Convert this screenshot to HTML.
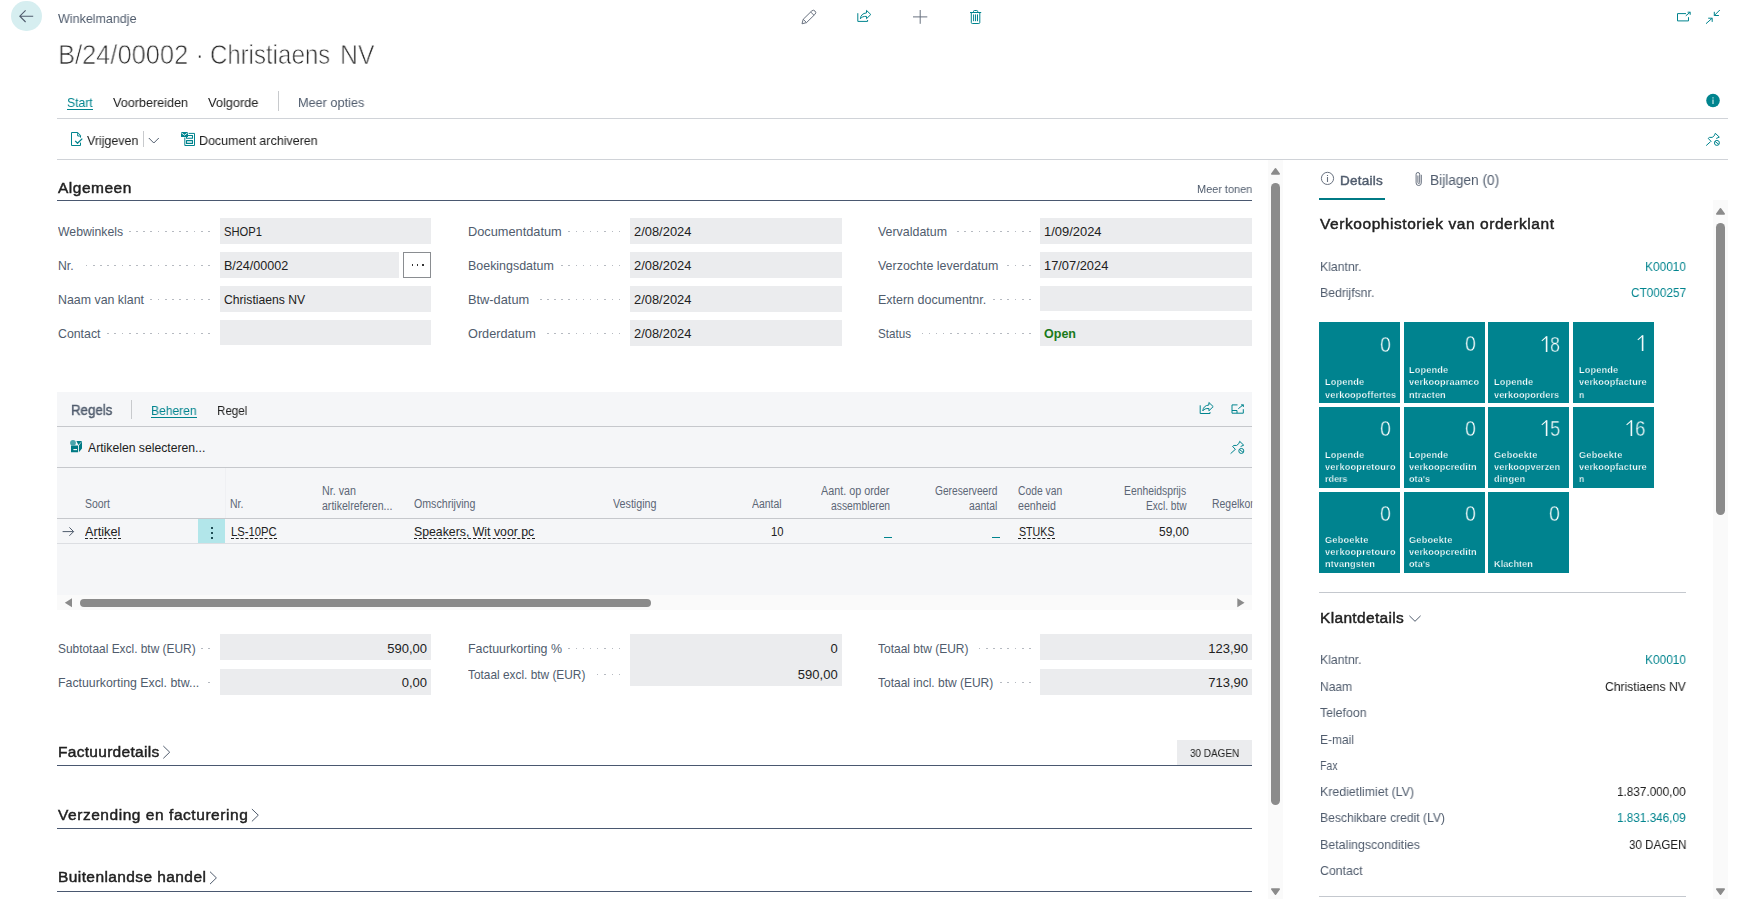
<!DOCTYPE html>
<html><head><meta charset="utf-8"><title>Winkelmandje</title>
<style>
html,body{margin:0;padding:0;background:#fff;}
body{width:1757px;height:899px;position:relative;overflow:hidden;font-family:"Liberation Sans", sans-serif;}
#p div,#p span,#p svg{position:absolute;}
#p span{white-space:pre;}
.dl i{position:absolute;top:0;width:1.5px;height:1.5px;background:#b6bac1;}
</style></head>
<body><div id="p">
<div style="left:11.2px;top:0.8px;width:30.5px;height:30.5px;background:#d6eef0;border-radius:50%;"></div>
<div style="left:67px;top:109px;width:26px;height:1px;background:#00848e;"></div>
<div style="left:278px;top:91px;width:1px;height:20px;background:#c8cacd;"></div>
<div style="left:57px;top:118px;width:1671px;height:1px;background:#d0d3d8;"></div>
<div style="left:57px;top:159px;width:1671px;height:1px;background:#d0d3d8;"></div>
<div style="left:143px;top:131px;width:1px;height:16px;background:#c8cacd;"></div>
<div style="left:57px;top:200px;width:1195px;height:1px;background:#4a5870;"></div>
<div class="dl" style="left:129.35px;top:230.75px;"><i style="left:78.80px"></i><i style="left:71.80px"></i><i style="left:64.30px"></i><i style="left:56.90px"></i><i style="left:49.90px"></i><i style="left:42.90px"></i><i style="left:35.90px"></i><i style="left:28.40px"></i><i style="left:21.00px"></i><i style="left:14.00px"></i><i style="left:7.00px"></i><i style="left:0.00px"></i></div>
<div style="left:220px;top:218px;width:211px;height:26px;background:#ebecee;"></div>
<div class="dl" style="left:85.95px;top:264.75px;"><i style="left:122.20px"></i><i style="left:115.20px"></i><i style="left:107.70px"></i><i style="left:100.30px"></i><i style="left:93.30px"></i><i style="left:86.30px"></i><i style="left:79.30px"></i><i style="left:71.80px"></i><i style="left:64.40px"></i><i style="left:57.40px"></i><i style="left:50.40px"></i><i style="left:43.40px"></i><i style="left:35.90px"></i><i style="left:28.50px"></i><i style="left:21.50px"></i><i style="left:14.50px"></i><i style="left:7.50px"></i><i style="left:0.00px"></i></div>
<div style="left:220px;top:252px;width:179px;height:26px;background:#ebecee;"></div>
<div style="left:403px;top:252px;width:28px;height:26px;background:#fff;box-sizing:border-box;border:1px solid #8a8d91;"></div>
<div style="left:411.6px;top:264.4px;width:1.6px;height:1.6px;background:#333;"></div>
<div style="left:416.8px;top:264.4px;width:1.6px;height:1.6px;background:#333;"></div>
<div style="left:422px;top:264.4px;width:1.6px;height:1.6px;background:#333;"></div>
<div class="dl" style="left:150.35px;top:298.75px;"><i style="left:57.80px"></i><i style="left:50.80px"></i><i style="left:43.30px"></i><i style="left:35.90px"></i><i style="left:28.90px"></i><i style="left:21.90px"></i><i style="left:14.90px"></i><i style="left:7.40px"></i><i style="left:0.00px"></i></div>
<div style="left:220px;top:286px;width:211px;height:26px;background:#ebecee;"></div>
<div class="dl" style="left:107.45px;top:332.75px;"><i style="left:100.70px"></i><i style="left:93.70px"></i><i style="left:86.20px"></i><i style="left:78.80px"></i><i style="left:71.80px"></i><i style="left:64.80px"></i><i style="left:57.80px"></i><i style="left:50.30px"></i><i style="left:42.90px"></i><i style="left:35.90px"></i><i style="left:28.90px"></i><i style="left:21.90px"></i><i style="left:14.40px"></i><i style="left:7.00px"></i><i style="left:0.00px"></i></div>
<div style="left:220px;top:320px;width:211px;height:25px;background:#ebecee;"></div>
<div class="dl" style="left:568.45px;top:230.75px;"><i style="left:50.40px"></i><i style="left:43.40px"></i><i style="left:35.90px"></i><i style="left:28.50px"></i><i style="left:21.50px"></i><i style="left:14.50px"></i><i style="left:7.50px"></i><i style="left:0.00px"></i></div>
<div style="left:630px;top:218px;width:212px;height:26px;background:#ebecee;"></div>
<div class="dl" style="left:561.05px;top:264.75px;"><i style="left:57.80px"></i><i style="left:50.80px"></i><i style="left:43.30px"></i><i style="left:35.90px"></i><i style="left:28.90px"></i><i style="left:21.90px"></i><i style="left:14.90px"></i><i style="left:7.40px"></i><i style="left:0.00px"></i></div>
<div style="left:630px;top:252px;width:212px;height:26px;background:#ebecee;"></div>
<div class="dl" style="left:540.05px;top:298.75px;"><i style="left:78.80px"></i><i style="left:71.80px"></i><i style="left:64.30px"></i><i style="left:56.90px"></i><i style="left:49.90px"></i><i style="left:42.90px"></i><i style="left:35.90px"></i><i style="left:28.40px"></i><i style="left:21.00px"></i><i style="left:14.00px"></i><i style="left:7.00px"></i><i style="left:0.00px"></i></div>
<div style="left:630px;top:286px;width:212px;height:26px;background:#ebecee;"></div>
<div class="dl" style="left:547.05px;top:332.75px;"><i style="left:71.80px"></i><i style="left:64.80px"></i><i style="left:57.30px"></i><i style="left:49.90px"></i><i style="left:42.90px"></i><i style="left:35.90px"></i><i style="left:28.90px"></i><i style="left:21.40px"></i><i style="left:14.00px"></i><i style="left:7.00px"></i><i style="left:0.00px"></i></div>
<div style="left:630px;top:320px;width:212px;height:26px;background:#ebecee;"></div>
<div class="dl" style="left:957.45px;top:230.75px;"><i style="left:71.80px"></i><i style="left:64.80px"></i><i style="left:57.30px"></i><i style="left:49.90px"></i><i style="left:42.90px"></i><i style="left:35.90px"></i><i style="left:28.90px"></i><i style="left:21.40px"></i><i style="left:14.00px"></i><i style="left:7.00px"></i><i style="left:0.00px"></i></div>
<div style="left:1040px;top:218px;width:212px;height:26px;background:#ebecee;"></div>
<div class="dl" style="left:1007.35px;top:264.75px;"><i style="left:21.90px"></i><i style="left:14.90px"></i><i style="left:7.40px"></i><i style="left:0.00px"></i></div>
<div style="left:1040px;top:252px;width:212px;height:26px;background:#ebecee;"></div>
<div class="dl" style="left:993.35px;top:298.75px;"><i style="left:35.90px"></i><i style="left:28.90px"></i><i style="left:21.40px"></i><i style="left:14.00px"></i><i style="left:7.00px"></i><i style="left:0.00px"></i></div>
<div style="left:1040px;top:286px;width:212px;height:25px;background:#ebecee;"></div>
<div class="dl" style="left:921.55px;top:332.75px;"><i style="left:107.70px"></i><i style="left:100.70px"></i><i style="left:93.20px"></i><i style="left:85.80px"></i><i style="left:78.80px"></i><i style="left:71.80px"></i><i style="left:64.80px"></i><i style="left:57.30px"></i><i style="left:49.90px"></i><i style="left:42.90px"></i><i style="left:35.90px"></i><i style="left:28.90px"></i><i style="left:21.40px"></i><i style="left:14.00px"></i><i style="left:7.00px"></i><i style="left:0.00px"></i></div>
<div style="left:1040px;top:320px;width:212px;height:26px;background:#ebecee;"></div>
<div style="left:57px;top:392px;width:1195px;height:203px;background:#f5f6f8;"></div>
<div style="left:57px;top:595px;width:1195px;height:15px;background:#fafafa;"></div>
<div style="left:131px;top:399.5px;width:1px;height:19.0px;background:#c8cacd;"></div>
<div style="left:151px;top:416.5px;width:46px;height:1px;background:#00848e;"></div>
<div style="left:57px;top:426px;width:1195px;height:1px;background:#c6c8cc;"></div>
<div style="left:57px;top:467px;width:1195px;height:1px;background:#c6c8cc;"></div>
<div style="left:224.5px;top:468px;width:1px;height:50px;background:#eff0f3;"></div>
<div style="left:57px;top:518px;width:1195px;height:1px;background:#c6c8cc;"></div>
<div style="left:198px;top:519px;width:27px;height:24px;background:#b2e6ea;"></div>
<div style="left:211px;top:527px;width:1.7px;height:1.7px;background:#1f4e55;"></div>
<div style="left:211px;top:532.1px;width:1.7px;height:1.7px;background:#1f4e55;"></div>
<div style="left:211px;top:537.2px;width:1.7px;height:1.7px;background:#1f4e55;"></div>
<div style="left:85px;top:538.2px;width:36px;height:0px;background:transparent;border-top:1px dashed #222;"></div>
<div style="left:231px;top:538.2px;width:46px;height:0px;background:transparent;border-top:1px dashed #222;"></div>
<div style="left:414px;top:538.2px;width:120.5px;height:0px;background:transparent;border-top:1px dashed #222;"></div>
<div style="left:884.4px;top:537.2px;width:7.4px;height:1.2px;background:#00848e;"></div>
<div style="left:992.2px;top:537.2px;width:7.4px;height:1.2px;background:#00848e;"></div>
<div style="left:1018px;top:538.2px;width:36.5px;height:0px;background:transparent;border-top:1px dashed #222;"></div>
<div style="left:57px;top:543px;width:1195px;height:1px;background:#dcdee2;"></div>
<div style="left:80px;top:598.6px;width:571px;height:8px;background:#8b8b8b;border-radius:4px;"></div>
<div class="dl" style="left:201.15px;top:647.75px;"><i style="left:7.00px"></i><i style="left:0.00px"></i></div>
<div style="left:220px;top:634px;width:211px;height:26px;background:#ebecee;"></div>
<div class="dl" style="left:208.15px;top:681.75px;"><i style="left:0.00px"></i></div>
<div style="left:220px;top:669px;width:211px;height:26px;background:#ebecee;"></div>
<div style="left:630px;top:634px;width:212px;height:52px;background:#ebecee;"></div>
<div class="dl" style="left:568.45px;top:647.75px;"><i style="left:50.40px"></i><i style="left:43.40px"></i><i style="left:35.90px"></i><i style="left:28.50px"></i><i style="left:21.50px"></i><i style="left:14.50px"></i><i style="left:7.50px"></i><i style="left:0.00px"></i></div>
<div class="dl" style="left:596.95px;top:673.75px;"><i style="left:21.90px"></i><i style="left:14.90px"></i><i style="left:7.40px"></i><i style="left:0.00px"></i></div>
<div class="dl" style="left:978.85px;top:647.75px;"><i style="left:50.40px"></i><i style="left:43.40px"></i><i style="left:35.90px"></i><i style="left:28.50px"></i><i style="left:21.50px"></i><i style="left:14.50px"></i><i style="left:7.50px"></i><i style="left:0.00px"></i></div>
<div style="left:1040px;top:634px;width:212px;height:26px;background:#ebecee;"></div>
<div class="dl" style="left:1000.35px;top:681.75px;"><i style="left:28.90px"></i><i style="left:21.90px"></i><i style="left:14.40px"></i><i style="left:7.00px"></i><i style="left:0.00px"></i></div>
<div style="left:1040px;top:669px;width:212px;height:26px;background:#ebecee;"></div>
<div style="left:57px;top:765px;width:1195px;height:1px;background:#4a5870;"></div>
<div style="left:57px;top:828px;width:1195px;height:1px;background:#4a5870;"></div>
<div style="left:57px;top:891px;width:1195px;height:1px;background:#4a5870;"></div>
<div style="left:1177px;top:740px;width:75px;height:25px;background:#ebecee;"></div>
<div style="left:1268px;top:160px;width:15px;height:739px;background:#fafafa;"></div>
<div style="left:1271px;top:183px;width:9px;height:621.6px;background:#8b8b8b;border-radius:4.5px;"></div>
<div style="left:1319px;top:198px;width:66px;height:2px;background:#007a85;"></div>
<div style="left:1318.9px;top:322.1px;width:81.1px;height:80.8px;background:#00838f;"></div>
<div style="left:1403.53px;top:322.1px;width:81.1px;height:80.8px;background:#00838f;"></div>
<div style="left:1488.16px;top:322.1px;width:81.1px;height:80.8px;background:#00838f;"></div>
<div style="left:1572.79px;top:322.1px;width:81.1px;height:80.8px;background:#00838f;"></div>
<div style="left:1318.9px;top:407.05px;width:81.1px;height:80.8px;background:#00838f;"></div>
<div style="left:1403.53px;top:407.05px;width:81.1px;height:80.8px;background:#00838f;"></div>
<div style="left:1488.16px;top:407.05px;width:81.1px;height:80.8px;background:#00838f;"></div>
<div style="left:1572.79px;top:407.05px;width:81.1px;height:80.8px;background:#00838f;"></div>
<div style="left:1318.9px;top:492.0px;width:81.1px;height:80.8px;background:#00838f;"></div>
<div style="left:1403.53px;top:492.0px;width:81.1px;height:80.8px;background:#00838f;"></div>
<div style="left:1488.16px;top:492.0px;width:81.1px;height:80.8px;background:#00838f;"></div>
<div style="left:1319px;top:592px;width:367px;height:1px;background:#c4c8ce;"></div>
<div style="left:1319px;top:895.5px;width:367px;height:1px;background:#c4c8ce;"></div>
<div style="left:1713px;top:200px;width:15px;height:699px;background:#fafafa;"></div>
<div style="left:1716px;top:223px;width:9px;height:292px;background:#8b8b8b;border-radius:4.5px;"></div>
<svg width="1757" height="899" viewBox="0 0 1757 899" style="left:0;top:0">
<path d="M33.2 16.2H19.8M25.6 10.4L19.8 16.2L25.6 22" fill="none" stroke="#505c6d" stroke-width="1.1"/>
<path d="M148.8 138L153.8 143L158.8 138" fill="none" stroke="#505c6d" stroke-width="1"/>
<path d="M62.6 531.6H73.6M69.4 527.4L73.6 531.6L69.4 535.8" fill="none" stroke="#505c6d" stroke-width="1"/>
<path d="M72 598.2V607.2L64.8 602.7Z" fill="#8b8b8b"/>
<path d="M1237.3 598.2V607.2L1244.5 602.7Z" fill="#8b8b8b"/>
<path d="M163.3 746.0L169.7 752.2L163.3 758.4" fill="none" stroke="#505c6d" stroke-width="1"/>
<path d="M251.9 809.0L258.3 815.2L251.9 821.4" fill="none" stroke="#505c6d" stroke-width="1"/>
<path d="M210.0 871.7L216.4 877.9L210.0 884.1" fill="none" stroke="#505c6d" stroke-width="1"/>
<path d="M1271.7 174L1275.5 168.7L1279.3 174Z" fill="#8b8b8b" stroke="#8b8b8b" stroke-width="1.4" stroke-linejoin="round"/>
<path d="M1271.7 889L1275.5 894.3L1279.3 889Z" fill="#8b8b8b" stroke="#8b8b8b" stroke-width="1.4" stroke-linejoin="round"/>
<path d="M1546.6 336.2V352" stroke="#f2fafa" stroke-width="1.6" fill="none"/>
<path d="M1541.8 340.9L1546.3999999999999 336.9" stroke="#f2fafa" stroke-width="1.15" fill="none"/>
<path d="M1642.6 335.2V351" stroke="#f2fafa" stroke-width="1.6" fill="none"/>
<path d="M1637.8 339.9L1642.3999999999999 335.9" stroke="#f2fafa" stroke-width="1.15" fill="none"/>
<path d="M1546.6 420.2V436" stroke="#f2fafa" stroke-width="1.6" fill="none"/>
<path d="M1541.8 424.9L1546.3999999999999 420.9" stroke="#f2fafa" stroke-width="1.15" fill="none"/>
<path d="M1631.4 420.2V436" stroke="#f2fafa" stroke-width="1.6" fill="none"/>
<path d="M1626.6000000000001 424.9L1631.2 420.9" stroke="#f2fafa" stroke-width="1.15" fill="none"/>
<path d="M1409.4 615.8L1415 621.3L1420.6 615.8" fill="none" stroke="#505c6d" stroke-width="1"/>
<path d="M1716.7 214L1720.5 208.7L1724.3 214Z" fill="#8b8b8b" stroke="#8b8b8b" stroke-width="1.4" stroke-linejoin="round"/>
<path d="M1716.7 889L1720.5 894.3L1724.3 889Z" fill="#8b8b8b" stroke="#8b8b8b" stroke-width="1.4" stroke-linejoin="round"/>
<path d="M803.2 19.3L811.7 11A2.3 2.3 0 0 1 815 14.3L806.5 22.6L802 23.8ZM803.2 19.3L806.5 22.6M810.7 12L814 15.3" fill="none" stroke="#68717f" stroke-width="1" stroke-linejoin="round" stroke-linecap="butt" />
<path d="M866.5 10.4L870.8 14.5L866.5 18.7V16.4C863.5 16.2 861.6 17 860.4 18.8C860.6 15.4 862.8 13.2 866.5 12.9Z" fill="none" stroke="#00848e" stroke-width="1" stroke-linejoin="round" stroke-linecap="butt" />
<path d="M857.8 13.2V21.4H867.6V20" fill="none" stroke="#00848e" stroke-width="1" stroke-linejoin="round" stroke-linecap="butt" />
<path d="M1208.9 402.5L1213.1999999999998 406.6L1208.9 410.8V408.5C1205.9 408.3 1204.0 409.1 1202.8 410.90000000000003C1203.0 407.5 1205.1999999999998 405.3 1208.9 405.0Z" fill="none" stroke="#00848e" stroke-width="1" stroke-linejoin="round" stroke-linecap="butt" />
<path d="M1200.1999999999998 405.3V413.5H1210.0V412.1" fill="none" stroke="#00848e" stroke-width="1" stroke-linejoin="round" stroke-linecap="butt" />
<path d="M920.2 10V23.8M913 16.9H927.3" fill="none" stroke="#68717f" stroke-width="1" stroke-linejoin="round" stroke-linecap="butt" />
<path d="M970 12.5H981.2M973.5 12.5V11.5A1 1 0 0 1 974.5 10.5H976.7A1 1 0 0 1 977.7 11.5V12.5M971.3 12.5V22.5A1 1 0 0 0 972.3 23.5H978.8A1 1 0 0 0 979.8 22.5V12.5M973.6 14.4V21.2M975.55 14.4V21.2M977.5 14.4V21.2" fill="none" stroke="#00848e" stroke-width="1" stroke-linejoin="round" stroke-linecap="butt" />
<path d="M1686 13.6H1677.5V20.9H1688.5V17.2M1685.8 15.8L1690.2 12.2M1687.6 12.2H1690.2V14.8" fill="none" stroke="#00848e" stroke-width="1" stroke-linejoin="round" stroke-linecap="butt" />
<path d="M1719.8 10L1714.3 15.5M1714.3 11.8V15.5H1718.9M1706 23.7L1712.2 18.2M1708.2 18.2H1712.2V21.9" fill="none" stroke="#00848e" stroke-width="1" stroke-linejoin="round" stroke-linecap="butt" />
<circle cx="1713" cy="100.5" r="6.8" fill="#00848e"/>
<path d="M1713 97.3V98.4M1713 99.6V104" stroke="#c9e8ea" stroke-width="1.2" fill="none"/>
<path d="M1716.2 138.5L1719.3 137.1L1715.3 133.3L1714.4 135.6L1712.2 137.4H1709.5L1708.2 138.4L1711.3 141.6M1710.6 141.6L1706.2 145.6" fill="none" stroke="#00848e" stroke-width="1" stroke-linejoin="round" stroke-linecap="butt" />
<circle cx="1716.9" cy="142.9" r="2.5" fill="none" stroke="#00848e" stroke-width="1"/>
<path d="M1715 141.4L1718.8 144.4" fill="none" stroke="#00848e" stroke-width="1" stroke-linejoin="round" stroke-linecap="butt" />
<path d="M1240.6 446.55L1243.6999999999998 445.15L1239.6999999999998 441.35L1238.8000000000002 443.65L1236.6 445.45000000000005H1233.9L1232.6 446.45000000000005L1235.6999999999998 449.65M1235.0 449.65L1230.6 453.65" fill="none" stroke="#00848e" stroke-width="1" stroke-linejoin="round" stroke-linecap="butt" />
<circle cx="1241.3000000000002" cy="450.95000000000005" r="2.5" fill="none" stroke="#00848e" stroke-width="1"/>
<path d="M1239.4 449.45000000000005L1243.1999999999998 452.45000000000005" fill="none" stroke="#00848e" stroke-width="1" stroke-linejoin="round" stroke-linecap="butt" />
<path d="M1237.5 404.9H1232V413.2H1243.3V409.2M1232 410.5H1237V413.2M1238.3 408.7L1243.4 404.7M1241 404.9H1243.3V407" fill="none" stroke="#00848e" stroke-width="1" stroke-linejoin="round" stroke-linecap="butt" style="stroke-linejoin:miter"/>
<path d="M77.7 132.5H71.5V145.5H80.5V142.6M80.5 137.6V135.4L77.7 132.5V136H80.5" fill="none" stroke="#00848e" stroke-width="1" stroke-linejoin="round" stroke-linecap="butt" />
<path d="M75.2 140.9L77.5 143.2L82.3 138.6" fill="none" stroke="#00848e" stroke-width="1.3" stroke-linejoin="round" stroke-linecap="butt" />
<path d="M181 132H188V137H181Z" fill="#00848e"/>
<path d="M181.3 132.8L184.5 135.2L187.7 132.8" fill="none" stroke="#fff" stroke-width="0.9"/>
<path d="M188.6 133.4H194.5V145.5H184.8V137.6" fill="none" stroke="#00848e" stroke-width="1" stroke-linejoin="round" stroke-linecap="butt" />
<path d="M186.5 135.5H192.5V138.3H186.5ZM186.5 140.6H192.5V143.4H186.5Z" fill="none" stroke="#00848e" stroke-width="1.1" stroke-linejoin="round" stroke-linecap="butt" />
<path d="M71 445.6H78V452.2H71Z M76.4 441H82L78.4 445Z M78.9 445.6L82 441.6V448.4L78.9 452.2Z" fill="#007a84"/>
<path d="M73.4 449.6H77" stroke="#fff" stroke-width="1.1" fill="none"/>
<circle cx="73" cy="442.8" r="2.9" fill="#4aa5ac"/>
<circle cx="1327.5" cy="178.4" r="6.1" fill="none" stroke="#68717f" stroke-width="1"/>
<path d="M1327.5 175V176.1M1327.5 177.1V181.9" stroke="#68717f" stroke-width="1.1" fill="none"/>
<path d="M1421.3 174.8V182.9A2.6 2.6 0 0 1 1416.1 182.9V174.3A1.8 1.8 0 0 1 1419.7 174.3V182.6A0.9 0.9 0 0 1 1417.9 182.6V175.5" fill="none" stroke="#68717f" stroke-width="1" stroke-linejoin="round" stroke-linecap="butt" />
</svg>
<span style="top:9px;font-size:13px;line-height:19px;color:#505c6d;left:57.50px;will-change:transform;transform:scaleX(0.9615);transform-origin:0 0;">Winkelmandje</span>
<span style="top:37px;font-size:28px;line-height:35px;color:#2b2b2b;left:58.10px;will-change:transform;-webkit-text-stroke:0.75px #fff;transform:scaleX(0.9091);transform-origin:0 0;">B/24/00002</span>
<span style="top:37px;font-size:28px;line-height:35px;color:#2b2b2b;left:195.40px;will-change:transform;-webkit-text-stroke:0.75px #fff;">·</span>
<span style="top:37px;font-size:28px;line-height:35px;color:#2b2b2b;left:210.40px;will-change:transform;-webkit-text-stroke:0.75px #fff;transform:scaleX(0.8582);transform-origin:0 0;">Christiaens</span>
<span style="top:37px;font-size:28px;line-height:35px;color:#2b2b2b;left:339.50px;will-change:transform;-webkit-text-stroke:0.75px #fff;transform:scaleX(0.8855);transform-origin:0 0;">NV</span>
<span style="top:93px;font-size:13px;line-height:19px;color:#00848e;left:67.00px;will-change:transform;transform:scaleX(0.9365);transform-origin:0 0;">Start</span>
<span style="top:93px;font-size:13px;line-height:19px;color:#212121;left:113.00px;will-change:transform;transform:scaleX(0.9699);transform-origin:0 0;">Voorbereiden</span>
<span style="top:93px;font-size:13px;line-height:19px;color:#212121;left:208.00px;will-change:transform;transform:scaleX(0.9842);transform-origin:0 0;">Volgorde</span>
<span style="top:93px;font-size:13px;line-height:19px;color:#505c6d;left:297.50px;will-change:transform;transform:scaleX(0.9754);transform-origin:0 0;">Meer opties</span>
<span style="top:131px;font-size:13px;line-height:19px;color:#212121;left:87.00px;will-change:transform;transform:scaleX(0.9552);transform-origin:0 0;">Vrijgeven</span>
<span style="top:131px;font-size:13px;line-height:19px;color:#212121;left:199.30px;will-change:transform;transform:scaleX(0.9608);transform-origin:0 0;">Document archiveren</span>
<span style="top:177px;font-size:15.5px;line-height:21px;color:#212121;-webkit-text-stroke:0.45px #212121;letter-spacing:0.510px;left:57.73px;will-change:transform;">Algemeen</span>
<span style="top:181px;font-size:11px;line-height:16px;color:#505c6d;left:1196.80px;will-change:transform;transform:scaleX(0.9920);transform-origin:0 0;">Meer tonen</span>
<span style="top:222px;font-size:13px;line-height:19px;color:#505c6d;left:57.80px;transform:scaleX(0.9418);transform-origin:0 0;">Webwinkels</span>
<span style="top:222px;font-size:13px;line-height:19px;color:#212121;left:224.40px;transform:scaleX(0.8601);transform-origin:0 0;">SHOP1</span>
<span style="top:256px;font-size:13px;line-height:19px;color:#505c6d;left:57.80px;transform:scaleX(0.9427);transform-origin:0 0;">Nr.</span>
<span style="top:256px;font-size:13px;line-height:19px;color:#212121;left:224.40px;transform:scaleX(0.9654);transform-origin:0 0;">B/24/00002</span>
<span style="top:290px;font-size:13px;line-height:19px;color:#505c6d;left:57.80px;transform:scaleX(0.9518);transform-origin:0 0;">Naam van klant</span>
<span style="top:290px;font-size:13px;line-height:19px;color:#212121;left:224.40px;transform:scaleX(0.9357);transform-origin:0 0;">Christiaens NV</span>
<span style="top:324px;font-size:13px;line-height:19px;color:#505c6d;left:57.80px;transform:scaleX(0.9478);transform-origin:0 0;">Contact</span>
<span style="top:222px;font-size:13px;line-height:19px;color:#505c6d;left:467.80px;transform:scaleX(0.9831);transform-origin:0 0;">Documentdatum</span>
<span style="top:222px;font-size:13px;line-height:19px;color:#212121;left:634.40px;transform:scaleX(0.9926);transform-origin:0 0;">2/08/2024</span>
<span style="top:256px;font-size:13px;line-height:19px;color:#505c6d;left:467.80px;transform:scaleX(0.9571);transform-origin:0 0;">Boekingsdatum</span>
<span style="top:256px;font-size:13px;line-height:19px;color:#212121;left:634.40px;transform:scaleX(0.9926);transform-origin:0 0;">2/08/2024</span>
<span style="top:290px;font-size:13px;line-height:19px;color:#505c6d;left:467.80px;transform:scaleX(0.9845);transform-origin:0 0;">Btw-datum</span>
<span style="top:290px;font-size:13px;line-height:19px;color:#212121;left:634.40px;transform:scaleX(0.9926);transform-origin:0 0;">2/08/2024</span>
<span style="top:324px;font-size:13px;line-height:19px;color:#505c6d;left:467.80px;transform:scaleX(0.9769);transform-origin:0 0;">Orderdatum</span>
<span style="top:324px;font-size:13px;line-height:19px;color:#212121;left:634.40px;transform:scaleX(0.9926);transform-origin:0 0;">2/08/2024</span>
<span style="top:222px;font-size:13px;line-height:19px;color:#505c6d;left:878.20px;transform:scaleX(0.9545);transform-origin:0 0;">Vervaldatum</span>
<span style="top:222px;font-size:13px;line-height:19px;color:#212121;left:1044.40px;transform:scaleX(0.9943);transform-origin:0 0;">1/09/2024</span>
<span style="top:256px;font-size:13px;line-height:19px;color:#505c6d;left:878.20px;transform:scaleX(0.9566);transform-origin:0 0;">Verzochte leverdatum</span>
<span style="top:256px;font-size:13px;line-height:19px;color:#212121;left:1044.40px;transform:scaleX(0.9883);transform-origin:0 0;">17/07/2024</span>
<span style="top:290px;font-size:13px;line-height:19px;color:#505c6d;left:878.20px;transform:scaleX(0.9595);transform-origin:0 0;">Extern documentnr.</span>
<span style="top:324px;font-size:13px;line-height:19px;color:#505c6d;left:878.20px;transform:scaleX(0.8953);transform-origin:0 0;">Status</span>
<span style="top:324px;font-size:13px;line-height:19px;color:#1a7a1a;font-weight:700;left:1044.40px;transform:scaleX(0.9632);transform-origin:0 0;">Open</span>
<span style="top:400px;font-size:14px;line-height:20px;color:#505c6d;-webkit-text-stroke:0.45px #505c6d;left:71.41px;will-change:transform;transform:scaleX(0.9491);transform-origin:0 0;">Regels</span>
<span style="top:401px;font-size:13px;line-height:19px;color:#00848e;left:151.30px;will-change:transform;transform:scaleX(0.9259);transform-origin:0 0;">Beheren</span>
<span style="top:401px;font-size:13px;line-height:19px;color:#212121;left:217.30px;will-change:transform;transform:scaleX(0.8927);transform-origin:0 0;">Regel</span>
<span style="top:438px;font-size:13px;line-height:19px;color:#212121;left:88.00px;transform:scaleX(0.9381);transform-origin:0 0;">Artikelen selecteren...</span>
<span style="top:495px;font-size:12px;line-height:18px;color:#5c6676;left:84.60px;transform:scaleX(0.8707);transform-origin:0 0;">Soort</span>
<span style="top:495px;font-size:12px;line-height:18px;color:#5c6676;left:230.00px;transform:scaleX(0.8718);transform-origin:0 0;">Nr.</span>
<span style="top:482px;font-size:12px;line-height:18px;color:#5c6676;left:321.60px;transform:scaleX(0.8947);transform-origin:0 0;">Nr. van</span>
<span style="top:497px;font-size:12px;line-height:18px;color:#5c6676;left:321.60px;transform:scaleX(0.8792);transform-origin:0 0;">artikelreferen...</span>
<span style="top:495px;font-size:12px;line-height:18px;color:#5c6676;left:413.70px;transform:scaleX(0.8854);transform-origin:0 0;">Omschrijving</span>
<span style="top:495px;font-size:12px;line-height:18px;color:#5c6676;left:613.10px;transform:scaleX(0.8934);transform-origin:0 0;">Vestiging</span>
<span style="top:495px;font-size:12px;line-height:18px;color:#5c6676;left:751.80px;transform:scaleX(0.8705);transform-origin:0 0;">Aantal</span>
<span style="top:482px;font-size:12px;line-height:18px;color:#5c6676;left:821.30px;transform:scaleX(0.9003);transform-origin:0 0;">Aant. op order</span>
<span style="top:497px;font-size:12px;line-height:18px;color:#5c6676;left:830.70px;transform:scaleX(0.8604);transform-origin:0 0;">assembleren</span>
<span style="top:482px;font-size:12px;line-height:18px;color:#5c6676;left:935.10px;transform:scaleX(0.8492);transform-origin:0 0;">Gereserveerd</span>
<span style="top:497px;font-size:12px;line-height:18px;color:#5c6676;left:969.20px;transform:scaleX(0.8630);transform-origin:0 0;">aantal</span>
<span style="top:482px;font-size:12px;line-height:18px;color:#5c6676;left:1017.60px;transform:scaleX(0.8586);transform-origin:0 0;">Code van</span>
<span style="top:497px;font-size:12px;line-height:18px;color:#5c6676;left:1017.60px;transform:scaleX(0.8875);transform-origin:0 0;">eenheid</span>
<span style="top:482px;font-size:12px;line-height:18px;color:#5c6676;left:1124.30px;transform:scaleX(0.8619);transform-origin:0 0;">Eenheidsprijs</span>
<span style="top:497px;font-size:12px;line-height:18px;color:#5c6676;left:1145.70px;transform:scaleX(0.8470);transform-origin:0 0;">Excl. btw</span>
<span style="top:495px;font-size:12px;line-height:18px;color:#5c6676;left:1211.70px;transform:scaleX(0.8698);transform-origin:0 0;clip-path:inset(0 1.70px 0 0);">Regelkor</span>
<span style="top:522px;font-size:13px;line-height:19px;color:#212121;left:85.30px;transform:scaleX(0.9779);transform-origin:0 0;">Artikel</span>
<span style="top:522px;font-size:13px;line-height:19px;color:#212121;left:231.00px;transform:scaleX(0.8649);transform-origin:0 0;">LS-10PC</span>
<span style="top:522px;font-size:13px;line-height:19px;color:#212121;left:414.10px;transform:scaleX(0.9453);transform-origin:0 0;">Speakers, Wit voor pc</span>
<span style="top:522px;font-size:13px;line-height:19px;color:#212121;left:771.20px;transform:scaleX(0.8648);transform-origin:0 0;">10</span>
<span style="top:522px;font-size:13px;line-height:19px;color:#212121;left:1018.50px;transform:scaleX(0.8195);transform-origin:0 0;">STUKS</span>
<span style="top:522px;font-size:13px;line-height:19px;color:#212121;left:1158.50px;transform:scaleX(0.9191);transform-origin:0 0;">59,00</span>
<span style="top:639px;font-size:13px;line-height:19px;color:#505c6d;left:57.50px;transform:scaleX(0.9161);transform-origin:0 0;">Subtotaal Excl. btw (EUR)</span>
<span style="top:639px;font-size:13px;line-height:19px;color:#212121;left:387.25px;">590,00</span>
<span style="top:673px;font-size:13px;line-height:19px;color:#505c6d;left:57.50px;transform:scaleX(0.9491);transform-origin:0 0;">Factuurkorting Excl. btw...</span>
<span style="top:673px;font-size:13px;line-height:19px;color:#212121;left:401.70px;">0,00</span>
<span style="top:639px;font-size:13px;line-height:19px;color:#505c6d;left:468.00px;transform:scaleX(0.9565);transform-origin:0 0;">Factuurkorting %</span>
<span style="top:639px;font-size:13px;line-height:19px;color:#212121;left:830.38px;">0</span>
<span style="top:665px;font-size:13px;line-height:19px;color:#505c6d;left:468.00px;transform:scaleX(0.9128);transform-origin:0 0;">Totaal excl. btw (EUR)</span>
<span style="top:665px;font-size:13px;line-height:19px;color:#212121;left:797.85px;">590,00</span>
<span style="top:639px;font-size:13px;line-height:19px;color:#505c6d;left:878.00px;transform:scaleX(0.9209);transform-origin:0 0;">Totaal btw (EUR)</span>
<span style="top:639px;font-size:13px;line-height:19px;color:#212121;left:1208.25px;">123,90</span>
<span style="top:673px;font-size:13px;line-height:19px;color:#505c6d;left:878.00px;transform:scaleX(0.9223);transform-origin:0 0;">Totaal incl. btw (EUR)</span>
<span style="top:673px;font-size:13px;line-height:19px;color:#212121;left:1208.25px;">713,90</span>
<span style="top:741px;font-size:15.5px;line-height:21px;color:#212121;-webkit-text-stroke:0.45px #212121;letter-spacing:0.292px;left:57.73px;will-change:transform;">Factuurdetails</span>
<span style="top:804px;font-size:15.5px;line-height:21px;color:#212121;-webkit-text-stroke:0.45px #212121;letter-spacing:0.546px;left:57.73px;will-change:transform;">Verzending en facturering</span>
<span style="top:866px;font-size:15.5px;line-height:21px;color:#212121;-webkit-text-stroke:0.45px #212121;letter-spacing:0.411px;left:57.73px;will-change:transform;">Buitenlandse handel</span>
<span style="top:745px;font-size:11px;line-height:16px;color:#212121;left:1190.10px;will-change:transform;transform:scaleX(0.9044);transform-origin:0 0;">30 DAGEN</span>
<span style="top:171px;font-size:13.5px;line-height:19px;color:#505c6d;-webkit-text-stroke:0.45px #505c6d;letter-spacing:0.247px;left:1340.12px;will-change:transform;">Details</span>
<span style="top:170px;font-size:14px;line-height:20px;color:#505c6d;left:1430.20px;will-change:transform;transform:scaleX(0.9766);transform-origin:0 0;">Bijlagen (0)</span>
<span style="top:213px;font-size:15.5px;line-height:21px;color:#212121;-webkit-text-stroke:0.45px #212121;letter-spacing:0.563px;left:1320.22px;will-change:transform;">Verkoophistoriek van orderklant</span>
<span style="top:257px;font-size:13px;line-height:19px;color:#505c6d;left:1320.00px;will-change:transform;transform:scaleX(0.9406);transform-origin:0 0;">Klantnr.</span>
<span style="top:257px;font-size:13px;line-height:19px;color:#00848e;left:1644.90px;will-change:transform;transform:scaleX(0.9149);transform-origin:0 0;">K00010</span>
<span style="top:283px;font-size:13px;line-height:19px;color:#505c6d;left:1320.00px;will-change:transform;transform:scaleX(0.9405);transform-origin:0 0;">Bedrijfsnr.</span>
<span style="top:283px;font-size:13px;line-height:19px;color:#00848e;left:1630.80px;will-change:transform;transform:scaleX(0.9077);transform-origin:0 0;">CT000257</span>
<span style="top:330px;font-size:22px;line-height:29px;color:#ffffff;left:1380.20px;will-change:transform;-webkit-text-stroke:0.4px #00838f;transform:scaleX(0.8835);transform-origin:0 0;">0</span>
<span style="top:375px;font-size:9.2px;line-height:14px;color:#fff;font-weight:700;letter-spacing:0.138px;left:1324.70px;will-change:transform;-webkit-text-stroke:0.25px #00838f;">Lopende</span>
<span style="top:388px;font-size:9.2px;line-height:14px;color:#fff;font-weight:700;letter-spacing:0.120px;left:1324.70px;will-change:transform;-webkit-text-stroke:0.25px #00838f;">verkoopoffertes</span>
<span style="top:329px;font-size:22px;line-height:29px;color:#ffffff;left:1464.83px;will-change:transform;-webkit-text-stroke:0.4px #00838f;transform:scaleX(0.8835);transform-origin:0 0;">0</span>
<span style="top:363px;font-size:9.2px;line-height:14px;color:#fff;font-weight:700;letter-spacing:0.138px;left:1409.33px;will-change:transform;-webkit-text-stroke:0.25px #00838f;">Lopende</span>
<span style="top:375px;font-size:9.2px;line-height:14px;color:#fff;font-weight:700;letter-spacing:0.139px;left:1409.33px;will-change:transform;-webkit-text-stroke:0.25px #00838f;">verkoopraamco</span>
<span style="top:388px;font-size:9.2px;line-height:14px;color:#fff;font-weight:700;letter-spacing:0.065px;left:1409.33px;will-change:transform;-webkit-text-stroke:0.25px #00838f;">ntracten</span>
<span style="top:330px;font-size:22px;line-height:29px;color:#ffffff;left:1550.30px;will-change:transform;-webkit-text-stroke:0.4px #00838f;transform:scaleX(0.8148);transform-origin:0 0;">8</span>
<span style="top:375px;font-size:9.2px;line-height:14px;color:#fff;font-weight:700;letter-spacing:0.138px;left:1493.96px;will-change:transform;-webkit-text-stroke:0.25px #00838f;">Lopende</span>
<span style="top:388px;font-size:9.2px;line-height:14px;color:#fff;font-weight:700;letter-spacing:0.072px;left:1493.96px;will-change:transform;-webkit-text-stroke:0.25px #00838f;">verkooporders</span>
<span style="top:363px;font-size:9.2px;line-height:14px;color:#fff;font-weight:700;letter-spacing:0.138px;left:1578.59px;will-change:transform;-webkit-text-stroke:0.25px #00838f;">Lopende</span>
<span style="top:375px;font-size:9.2px;line-height:14px;color:#fff;font-weight:700;letter-spacing:0.102px;left:1578.59px;will-change:transform;-webkit-text-stroke:0.25px #00838f;">verkoopfacture</span>
<span style="top:388px;font-size:9.2px;line-height:14px;color:#fff;font-weight:700;left:1578.59px;will-change:transform;-webkit-text-stroke:0.25px #00838f;transform:scaleX(0.9079);transform-origin:0 0;">n</span>
<span style="top:414px;font-size:22px;line-height:29px;color:#ffffff;left:1380.20px;will-change:transform;-webkit-text-stroke:0.4px #00838f;transform:scaleX(0.8835);transform-origin:0 0;">0</span>
<span style="top:448px;font-size:9.2px;line-height:14px;color:#fff;font-weight:700;letter-spacing:0.138px;left:1324.70px;will-change:transform;-webkit-text-stroke:0.25px #00838f;">Lopende</span>
<span style="top:460px;font-size:9.2px;line-height:14px;color:#fff;font-weight:700;letter-spacing:0.200px;left:1324.70px;will-change:transform;-webkit-text-stroke:0.25px #00838f;">verkoopretouro</span>
<span style="top:472px;font-size:9.2px;line-height:14px;color:#fff;font-weight:700;left:1324.70px;will-change:transform;-webkit-text-stroke:0.25px #00838f;transform:scaleX(0.9750);transform-origin:0 0;">rders</span>
<span style="top:414px;font-size:22px;line-height:29px;color:#ffffff;left:1464.83px;will-change:transform;-webkit-text-stroke:0.4px #00838f;transform:scaleX(0.8835);transform-origin:0 0;">0</span>
<span style="top:448px;font-size:9.2px;line-height:14px;color:#fff;font-weight:700;letter-spacing:0.138px;left:1409.33px;will-change:transform;-webkit-text-stroke:0.25px #00838f;">Lopende</span>
<span style="top:460px;font-size:9.2px;line-height:14px;color:#fff;font-weight:700;letter-spacing:0.103px;left:1409.33px;will-change:transform;-webkit-text-stroke:0.25px #00838f;">verkoopcreditn</span>
<span style="top:472px;font-size:9.2px;line-height:14px;color:#fff;font-weight:700;left:1409.33px;will-change:transform;-webkit-text-stroke:0.25px #00838f;transform:scaleX(0.9968);transform-origin:0 0;">ota&#x27;s</span>
<span style="top:414px;font-size:22px;line-height:29px;color:#ffffff;left:1550.00px;will-change:transform;-webkit-text-stroke:0.4px #00838f;transform:scaleX(0.8393);transform-origin:0 0;">5</span>
<span style="top:448px;font-size:9.2px;line-height:14px;color:#fff;font-weight:700;letter-spacing:0.219px;left:1493.96px;will-change:transform;-webkit-text-stroke:0.25px #00838f;">Geboekte</span>
<span style="top:460px;font-size:9.2px;line-height:14px;color:#fff;font-weight:700;letter-spacing:0.112px;left:1493.96px;will-change:transform;-webkit-text-stroke:0.25px #00838f;">verkoopverzen</span>
<span style="top:472px;font-size:9.2px;line-height:14px;color:#fff;font-weight:700;letter-spacing:0.217px;left:1493.96px;will-change:transform;-webkit-text-stroke:0.25px #00838f;">dingen</span>
<span style="top:414px;font-size:22px;line-height:29px;color:#ffffff;left:1634.50px;will-change:transform;-webkit-text-stroke:0.4px #00838f;transform:scaleX(0.8500);transform-origin:0 0;">6</span>
<span style="top:448px;font-size:9.2px;line-height:14px;color:#fff;font-weight:700;letter-spacing:0.219px;left:1578.59px;will-change:transform;-webkit-text-stroke:0.25px #00838f;">Geboekte</span>
<span style="top:460px;font-size:9.2px;line-height:14px;color:#fff;font-weight:700;letter-spacing:0.102px;left:1578.59px;will-change:transform;-webkit-text-stroke:0.25px #00838f;">verkoopfacture</span>
<span style="top:472px;font-size:9.2px;line-height:14px;color:#fff;font-weight:700;left:1578.59px;will-change:transform;-webkit-text-stroke:0.25px #00838f;transform:scaleX(0.9079);transform-origin:0 0;">n</span>
<span style="top:499px;font-size:22px;line-height:29px;color:#ffffff;left:1380.20px;will-change:transform;-webkit-text-stroke:0.4px #00838f;transform:scaleX(0.8835);transform-origin:0 0;">0</span>
<span style="top:533px;font-size:9.2px;line-height:14px;color:#fff;font-weight:700;letter-spacing:0.219px;left:1324.70px;will-change:transform;-webkit-text-stroke:0.25px #00838f;">Geboekte</span>
<span style="top:545px;font-size:9.2px;line-height:14px;color:#fff;font-weight:700;letter-spacing:0.200px;left:1324.70px;will-change:transform;-webkit-text-stroke:0.25px #00838f;">verkoopretouro</span>
<span style="top:557px;font-size:9.2px;line-height:14px;color:#fff;font-weight:700;letter-spacing:0.099px;left:1324.70px;will-change:transform;-webkit-text-stroke:0.25px #00838f;">ntvangsten</span>
<span style="top:499px;font-size:22px;line-height:29px;color:#ffffff;left:1464.83px;will-change:transform;-webkit-text-stroke:0.4px #00838f;transform:scaleX(0.8835);transform-origin:0 0;">0</span>
<span style="top:533px;font-size:9.2px;line-height:14px;color:#fff;font-weight:700;letter-spacing:0.219px;left:1409.33px;will-change:transform;-webkit-text-stroke:0.25px #00838f;">Geboekte</span>
<span style="top:545px;font-size:9.2px;line-height:14px;color:#fff;font-weight:700;letter-spacing:0.103px;left:1409.33px;will-change:transform;-webkit-text-stroke:0.25px #00838f;">verkoopcreditn</span>
<span style="top:557px;font-size:9.2px;line-height:14px;color:#fff;font-weight:700;left:1409.33px;will-change:transform;-webkit-text-stroke:0.25px #00838f;transform:scaleX(0.9968);transform-origin:0 0;">ota&#x27;s</span>
<span style="top:499px;font-size:22px;line-height:29px;color:#ffffff;left:1549.46px;will-change:transform;-webkit-text-stroke:0.4px #00838f;transform:scaleX(0.8835);transform-origin:0 0;">0</span>
<span style="top:557px;font-size:9.2px;line-height:14px;color:#fff;font-weight:700;left:1493.96px;will-change:transform;-webkit-text-stroke:0.25px #00838f;transform:scaleX(0.9973);transform-origin:0 0;">Klachten</span>
<span style="top:607px;font-size:15.5px;line-height:21px;color:#212121;-webkit-text-stroke:0.45px #212121;letter-spacing:0.337px;left:1320.22px;will-change:transform;">Klantdetails</span>
<span style="top:650px;font-size:13px;line-height:19px;color:#505c6d;left:1320.00px;will-change:transform;transform:scaleX(0.9406);transform-origin:0 0;">Klantnr.</span>
<span style="top:650px;font-size:13px;line-height:19px;color:#00848e;left:1644.90px;will-change:transform;transform:scaleX(0.9149);transform-origin:0 0;">K00010</span>
<span style="top:677px;font-size:13px;line-height:19px;color:#505c6d;left:1320.00px;will-change:transform;transform:scaleX(0.9276);transform-origin:0 0;">Naam</span>
<span style="top:677px;font-size:13px;line-height:19px;color:#212121;left:1605.10px;will-change:transform;transform:scaleX(0.9322);transform-origin:0 0;">Christiaens NV</span>
<span style="top:703px;font-size:13px;line-height:19px;color:#505c6d;left:1320.00px;will-change:transform;transform:scaleX(0.9463);transform-origin:0 0;">Telefoon</span>
<span style="top:730px;font-size:13px;line-height:19px;color:#505c6d;left:1320.00px;will-change:transform;transform:scaleX(0.9235);transform-origin:0 0;">E-mail</span>
<span style="top:756px;font-size:13px;line-height:19px;color:#505c6d;left:1320.00px;will-change:transform;transform:scaleX(0.8075);transform-origin:0 0;">Fax</span>
<span style="top:782px;font-size:13px;line-height:19px;color:#505c6d;left:1320.00px;will-change:transform;transform:scaleX(0.9518);transform-origin:0 0;">Kredietlimiet (LV)</span>
<span style="top:782px;font-size:13px;line-height:19px;color:#212121;left:1617.30px;will-change:transform;transform:scaleX(0.9039);transform-origin:0 0;">1.837.000,00</span>
<span style="top:808px;font-size:13px;line-height:19px;color:#505c6d;left:1320.00px;will-change:transform;transform:scaleX(0.9316);transform-origin:0 0;">Beschikbare credit (LV)</span>
<span style="top:808px;font-size:13px;line-height:19px;color:#00848e;left:1617.30px;will-change:transform;transform:scaleX(0.9039);transform-origin:0 0;">1.831.346,09</span>
<span style="top:835px;font-size:13px;line-height:19px;color:#505c6d;left:1320.00px;will-change:transform;transform:scaleX(0.9542);transform-origin:0 0;">Betalingscondities</span>
<span style="top:835px;font-size:13px;line-height:19px;color:#212121;left:1628.50px;will-change:transform;transform:scaleX(0.8929);transform-origin:0 0;">30 DAGEN</span>
<span style="top:861px;font-size:13px;line-height:19px;color:#505c6d;left:1320.00px;will-change:transform;transform:scaleX(0.9478);transform-origin:0 0;">Contact</span>
</div></body></html>
